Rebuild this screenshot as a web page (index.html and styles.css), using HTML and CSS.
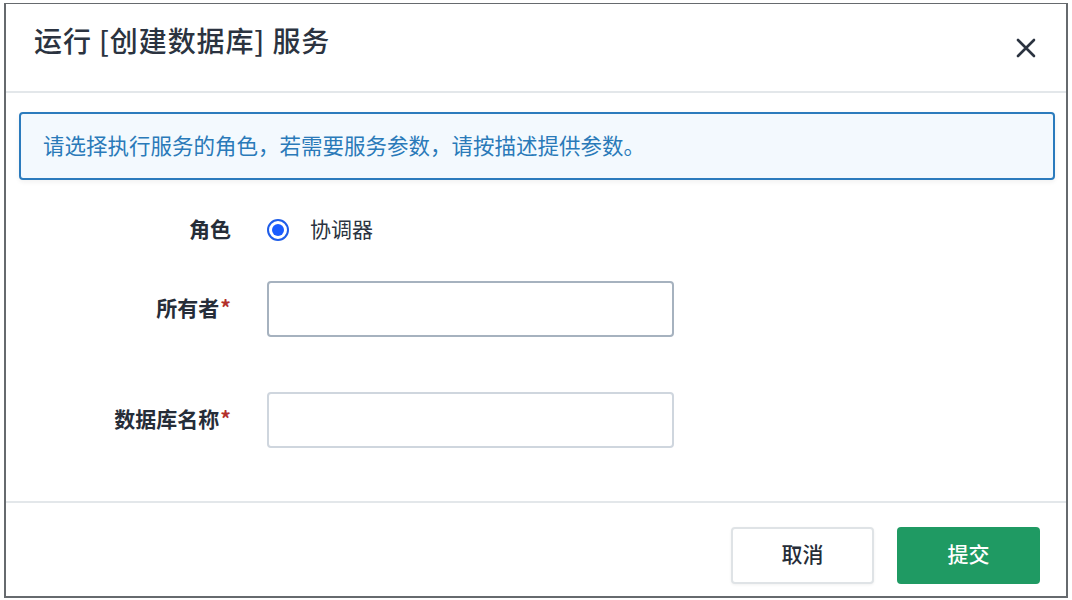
FILE: index.html
```html
<!DOCTYPE html>
<html lang="zh">
<head>
<meta charset="utf-8">
<link rel="stylesheet" href="styles.css">
</head>
<body>
<div class="frame">
  <div class="modal">
    <div class="modal-header">
      <h1 class="modal-title">运行 [创建数据库] 服务</h1>
      <button class="close" aria-label="关闭">
        <svg width="20" height="20" viewBox="0 0 20 20"><path d="M2 2 L18 18 M18 2 L2 18" stroke="#2b3340" stroke-width="2.6" stroke-linecap="round" fill="none"/></svg>
      </button>
    </div>
    <div class="modal-body">
      <div class="notice">请选择执行服务的角色，若需要服务参数，请按描述提供参数。</div>
      <div class="form">
        <div class="row row-role">
          <div class="label">角色</div>
          <div class="field">
            <label class="radio"><span class="radio-dot"></span><span class="radio-text">协调器</span></label>
          </div>
        </div>
        <div class="row row-owner">
          <div class="label">所有者<span class="req">*</span></div>
          <div class="field"><input class="input input-active" type="text"></div>
        </div>
        <div class="row row-db">
          <div class="label">数据库名称<span class="req">*</span></div>
          <div class="field"><input class="input" type="text"></div>
        </div>
      </div>
    </div>
    <div class="modal-footer">
      <button class="btn btn-cancel">取消</button>
      <button class="btn btn-submit">提交</button>
    </div>
  </div>
</div>
</body>
</html>
```

FILE: styles.css
```css
* { box-sizing: border-box; }
html, body {
  margin: 0;
  padding: 0;
  background: #ffffff;
  font-family: "Noto Sans CJK SC", "Noto Sans", sans-serif;
}
.frame {
  padding: 3px 4px 2px 4px;
  width: 1072px;
  height: 600px;
}
.modal {
  width: 1064px;
  height: 595px;
  border: 2px solid #666a6e;
  border-top-width: 1px;
  border-bottom-width: 2px;
  background: #fff;
  display: flex;
  flex-direction: column;
}
.modal-header {
  height: 89px;
  border-bottom: 2px solid #e3e7ea;
  display: flex;
  justify-content: space-between;
  align-items: flex-start;
  padding: 0 30px 0 28px;
}
.modal-title {
  margin: 16px 0 0 0;
  font-size: 28px;
  line-height: 40px;
  font-weight: 500;
  letter-spacing: 0.9px;
  color: #2b3340;
}
.close {
  margin-top: 34px;
  padding: 0;
  border: none;
  background: none;
  width: 20px;
  height: 20px;
  display: flex;
}
.modal-body {
  flex: 1;
  padding: 19px 11px 0 13px;
  border-bottom: 2px solid #e3e7ea;
}
.notice {
  height: 68px;
  border: 2px solid #2b7bbd;
  border-radius: 4px;
  background: #f3f9fe;
  box-shadow: 0 2px 5px rgba(0, 0, 0, 0.06);
  color: #2a7ab9;
  font-size: 21.5px;
  display: flex;
  align-items: center;
  padding: 0 0 3px 22px;
}
.form {
  padding-top: 29px;
}
.row {
  display: grid;
  grid-template-columns: 212px 407px;
  column-gap: 36px;
  align-items: center;
}
.row-role { height: 42px; }
.row-owner { margin-top: 30px; }
.row-db { margin-top: 55px; }
.label {
  text-align: right;
  font-size: 21px;
  font-weight: 700;
  color: #262d38;
  margin-bottom: 5px;
}
.req {
  color: #b3302b;
  margin-left: 1px;
}
.radio {
  display: flex;
  align-items: center;
  gap: 21px;
}
.radio-dot {
  width: 22px;
  height: 22px;
  border-radius: 50%;
  border: 2px solid #1f5de8;
  display: flex;
  align-items: center;
  justify-content: center;
}
.radio-dot::after {
  content: "";
  width: 12px;
  height: 12px;
  border-radius: 50%;
  background: #1a5cff;
}
.radio-text {
  font-size: 21px;
  color: #2b3340;
  margin-bottom: 4px;
}
.input {
  display: block;
  width: 407px;
  height: 56px;
  border: 2px solid #cfd6de;
  border-radius: 4px;
  background: #fff;
  outline: none;
  font-size: 20px;
}
.input-active {
  border-color: #a6b2bf;
}
.modal-footer {
  display: flex;
  justify-content: flex-end;
  gap: 23px;
  padding: 24px 26px 0 0;
  height: 93px;
}
.btn {
  width: 143px;
  height: 57px;
  border-radius: 4px;
  font-family: inherit;
  font-size: 21px;
  font-weight: 500;
  padding: 0 0 5px 0;
  cursor: pointer;
}
.btn-cancel {
  background: #fff;
  border: 2px solid #dfe3e6;
  color: #262d38;
  box-shadow: 0 1px 3px rgba(0, 0, 0, 0.06);
}
.btn-submit {
  background: #1f9a63;
  border: none;
  color: #fff;
}
```
